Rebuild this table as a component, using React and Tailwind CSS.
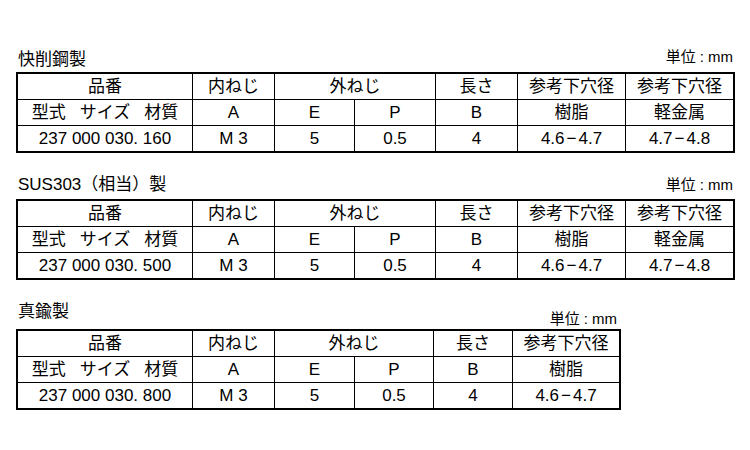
import React from "react";

const font = { fontFamily: '"Liberation Sans", "Noto Sans CJK JP", sans-serif' };

function Cell({ children, span, lastCol, lastRow }) {
  return (
    <div
      className={
        "flex items-center justify-center border-black text-[17px] leading-none text-black " +
        (span ? "col-span-2 " : "") +
        (lastCol ? "" : "border-r ") +
        (lastRow ? "h-[25px]" : "h-[26px] border-b")
      }
    >
      {children}
    </div>
  );
}

function SpecTable({ cols, rows }) {
  return (
    <div className={"grid border-2 border-black " + cols}>
      {rows.map((row, ri) =>
        row.map((c, ci) => (
          <Cell
            key={ri + "-" + ci}
            span={c.span}
            lastCol={ci === row.length - 1}
            lastRow={ri === rows.length - 1}
          >
            {c.t}
          </Cell>
        ))
      )}
    </div>
  );
}

const Range = ({ a, b }) => (
  <span className="flex items-center">
    {a}
    <span className="px-[2px]">−</span>
    {b}
  </span>
);

const modelLabel = (
  <span className="flex gap-[14px]">
    <span>型式</span>
    <span>サイズ</span>
    <span>材質</span>
  </span>
);

const head = (extra) => [
  [
    { t: "品番" },
    { t: "内ねじ" },
    { t: "外ねじ", span: true },
    { t: "長さ" },
    { t: "参考下穴径" },
    ...(extra ? [{ t: "参考下穴径" }] : []),
  ],
  [
    { t: modelLabel },
    { t: "A" },
    { t: "E" },
    { t: "P" },
    { t: "B" },
    { t: "樹脂" },
    ...(extra ? [{ t: "軽金属" }] : []),
  ],
];

const dataRow = (code, extra) => [
  { t: code },
  { t: "M 3" },
  { t: "5" },
  { t: "0.5" },
  { t: "4" },
  { t: <Range a="4.6" b="4.7" /> },
  ...(extra ? [{ t: <Range a="4.7" b="4.8" /> }] : []),
];

function Unit({ className }) {
  return (
    <div className={"flex text-[15px] leading-[20px] text-black " + className}>
      <span>単位</span>
      <span className="px-[4px]">:</span>
      <span>mm</span>
    </div>
  );
}

export default function App() {
  return (
    <div className="min-h-screen w-[750px] bg-white pt-[47px] pl-[16px]" style={font}>
      {/* 快削鋼製 */}
      <div className="w-[719px]">
        <div className="flex h-[25px] items-start justify-between">
          <div className="mt-[3px] pl-[2px] text-[17px] leading-[20px] text-black">快削鋼製</div>
          <Unit className="pr-[2px]" />
        </div>
        <SpecTable
          cols="grid-cols-[175px_82px_80px_81px_82px_108px_107px]"
          rows={[...head(true), dataRow("237 000 030. 160", true)]}
        />
      </div>

      {/* SUS303 */}
      <div className="mt-[22px] w-[719px]">
        <div className="flex h-[24px] items-start justify-between">
          <div className="pl-[2px] text-[17px] leading-[20px] text-black">SUS303（相当）製</div>
          <Unit className="pr-[2px]" />
        </div>
        <SpecTable
          cols="grid-cols-[175px_82px_80px_81px_82px_108px_107px]"
          rows={[...head(true), dataRow("237 000 030. 500", true)]}
        />
      </div>

      {/* 真鍮製 */}
      <div className="mt-[22px] w-[605px]">
        <div className="flex h-[27px] items-start justify-between">
          <div className="pl-[2px] text-[17px] leading-[20px] text-black">真鍮製</div>
          <Unit className="mt-[7px] pr-[4px]" />
        </div>
        <SpecTable
          cols="grid-cols-[175px_82px_80px_79px_79px_106px]"
          rows={[...head(false), dataRow("237 000 030. 800", false)]}
        />
      </div>
    </div>
  );
}
